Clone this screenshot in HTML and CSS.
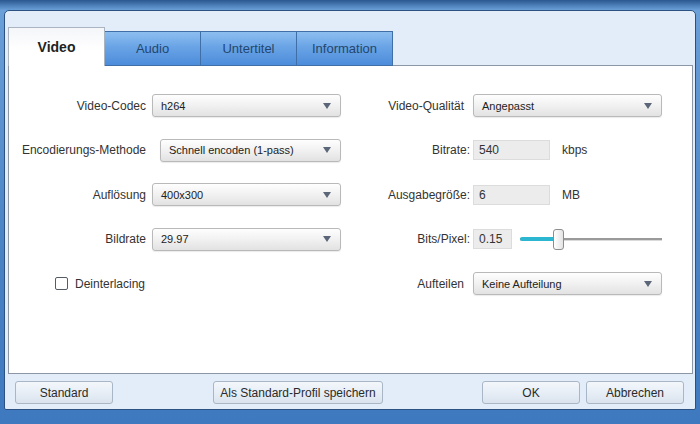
FILE: index.html
```html
<!DOCTYPE html>
<html lang="de">
<head>
    <meta charset="UTF-8">
    <title>Video-Einstellungen</title>
    <link rel="stylesheet" href="styles.css">
</head>
<body>
    <div class="window">
        <div class="tabs">
            <div class="tab active">Video</div>
            <div class="tab">Audio</div>
            <div class="tab">Untertitel</div>
            <div class="tab">Information</div>
        </div>

        <div class="content">
            <div class="form">
                <!-- Zeile 1 -->
                <label class="lbl">Video-Codec</label>
                <div class="select"><span>h264</span><i class="arrow"></i></div>
                <label class="lbl lbl-right">Video-Qualität</label>
                <div class="select"><span>Angepasst</span><i class="arrow"></i></div>

                <!-- Zeile 2 -->
                <label class="lbl">Encodierungs-Methode</label>
                <div class="select narrow"><span>Schnell encoden (1-pass)</span><i class="arrow"></i></div>
                <label class="lbl lbl-right colon">Bitrate:</label>
                <div class="field"><div class="input">540</div><span class="unit">kbps</span></div>

                <!-- Zeile 3 -->
                <label class="lbl">Auflösung</label>
                <div class="select"><span>400x300</span><i class="arrow"></i></div>
                <label class="lbl lbl-right colon">Ausgabegröße:</label>
                <div class="field"><div class="input">6</div><span class="unit">MB</span></div>

                <!-- Zeile 4 -->
                <label class="lbl">Bildrate</label>
                <div class="select"><span>29.97</span><i class="arrow"></i></div>
                <label class="lbl lbl-right colon">Bits/Pixel:</label>
                <div class="field">
                    <div class="input small">0.15</div>
                    <div class="slider">
                        <div class="slider-fill"></div>
                        <div class="slider-thumb"></div>
                    </div>
                </div>

                <!-- Zeile 5 -->
                <div class="check"><span class="box"></span>Deinterlacing</div>
                <label class="lbl lbl-right">Aufteilen</label>
                <div class="select"><span>Keine Aufteilung</span><i class="arrow"></i></div>
            </div>
        </div>

        <div class="footer">
            <div class="btn-group">
                <button class="btn">Standard</button>
                <button class="btn wide">Als Standard-Profil speichern</button>
            </div>
            <div class="btn-group right">
                <button class="btn">OK</button>
                <button class="btn">Abbrechen</button>
            </div>
        </div>
    </div>
</body>
</html>
```

FILE: styles.css
```css
body {
    margin: 0;
    padding: 10px 4px 14px 4px;
    height: 424px;
    box-sizing: border-box;
    overflow: hidden;
    background: linear-gradient(to bottom, #2a5790 0px, #6a9fd8 10px, #4a82c4 60%, #3e79bf 100%);
    font-family: Arial, "Liberation Sans", sans-serif;
}
.window {
    height: 100%;
    box-sizing: border-box;
    background-color: #e3edf9;
    border: 1px solid #2b5282;
    border-radius: 5px 5px 2px 2px;
    padding: 16px 2px 0 3px;
    display: flex;
    flex-direction: column;
}

/* Reiter */
.tabs {
    display: flex;
    align-items: flex-end;
    height: 39px;
    margin-bottom: -1px;
    position: relative;
    z-index: 1;
}
.tab {
    width: 96px;
    height: 35px;
    box-sizing: border-box;
    border: 1px solid #3f6fa6;
    border-left: none;
    background: linear-gradient(to bottom, #8dbef0 0%, #6aa4e6 45%, #4c8cda 100%);
    color: #23466f;
    font-size: 13px;
    text-align: center;
    line-height: 34px;
}
.tab.active {
    width: 97px;
    height: 39px;
    border: 1px solid #a9b4c0;
    border-bottom: none;
    background: linear-gradient(to bottom, #f4f6f9 0%, #ffffff 60%, #ffffff 100%);
    color: #222;
    font-weight: bold;
    font-size: 14px;
    line-height: 38px;
}

/* Inhalt */
.content {
    flex: 1;
    background-color: #fff;
    border: 1px solid #8b97a6;
}
.form {
    display: grid;
    grid-template-columns: 137px 189px 120px 189px;
    column-gap: 6px;
    grid-template-rows: repeat(5, 23px);
    row-gap: 21.5px;
    padding-top: 28px;
    font-size: 12px;
    color: #333;
}
.lbl {
    text-align: right;
    align-self: center;
}
.lbl-right {
    padding-right: 3px;
}
.lbl-right.colon {
    padding-right: 0;
    margin-right: -3px;
}

.select {
    height: 23px;
    box-sizing: border-box;
    border: 1px solid #b9b9b9;
    border-radius: 3px;
    background: linear-gradient(to bottom, #fefefe 0%, #f1f1f1 50%, #e2e2e2 100%);
    box-shadow: 0 1px 1px rgba(0, 0, 0, 0.08);
    display: flex;
    align-items: center;
    justify-content: space-between;
    padding: 0 9px 0 8px;
    font-size: 11px;
    color: #222;
}
.select.narrow {
    margin-left: 8px;
}
.arrow {
    width: 0;
    height: 0;
    border-left: 4px solid transparent;
    border-right: 4px solid transparent;
    border-top: 6px solid #5b6779;
}

.field {
    display: flex;
    align-items: center;
}
.input {
    width: 77px;
    height: 20px;
    box-sizing: border-box;
    background-color: #ececec;
    border: 1px solid #dcdcdc;
    padding-left: 5px;
    line-height: 18px;
    font-size: 12px;
    color: #333;
}
.input.small {
    width: 39px;
}
.unit {
    margin-left: 12px;
    font-size: 12px;
}

/* Schieberegler */
.slider {
    position: relative;
    margin-left: 8px;
    width: 142px;
    height: 20px;
}
.slider::before {
    content: "";
    position: absolute;
    left: 0;
    right: 0;
    top: 9px;
    height: 2px;
    background-color: #9a9a9a;
    border-bottom: 1px solid #dadada;
}
.slider-fill {
    position: absolute;
    left: 0;
    top: 8px;
    width: 36px;
    height: 4px;
    border-radius: 2px;
    background-color: #2cb6cf;
}
.slider-thumb {
    position: absolute;
    left: 33px;
    top: 0;
    width: 9px;
    height: 19px;
    border: 1px solid #8d8d8d;
    border-radius: 3px;
    background: linear-gradient(to right, #ffffff, #e4e4e4);
}

/* Checkbox */
.check {
    grid-column: 1 / 3;
    display: flex;
    align-items: center;
    padding-left: 46px;
    font-size: 12px;
    color: #333;
}
.box {
    width: 11px;
    height: 11px;
    border: 1px solid #555c66;
    border-radius: 2px;
    background-color: #fff;
    margin-right: 7px;
}

/* Fußzeile */
.footer {
    display: flex;
    justify-content: space-between;
    padding: 7px 9px 5px 7px;
}
.btn-group {
    display: flex;
    gap: 100px;
}
.btn-group.right {
    gap: 6px;
}
.btn {
    width: 98px;
    height: 23px;
    border: 1px solid #a9b6c5;
    border-radius: 3px;
    background: linear-gradient(to bottom, #f3f7fb 0%, #e7eef6 50%, #dae3ee 100%);
    font-family: Arial, "Liberation Sans", sans-serif;
    font-size: 12px;
    color: #2a2a2a;
    padding: 0;
}
.btn.wide {
    width: 170px;
}
```
